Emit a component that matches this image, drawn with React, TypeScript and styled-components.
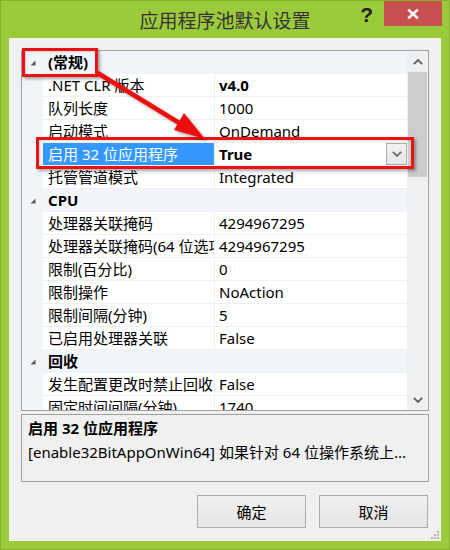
import React from 'react';
import styled, { createGlobalStyle } from 'styled-components';

const FONT = `"Noto Sans", "Noto Sans CJK SC", sans-serif`;

const GlobalStyle = createGlobalStyle`
  html, body { margin: 0; padding: 0; background: #ffffff; }
  body { font-family: ${FONT}; }
  * { box-sizing: border-box; }
`;

const Window = styled.div`
  position: relative;
  width: 450px;
  height: 550px;
  background: #9bca3b;
  border: 1px solid #86b12f;
  padding: 0 8px 8px 8px;
  display: flex;
  flex-direction: column;
`;

const TitleBar = styled.div`
  height: 37px;
  flex: none;
  display: grid;
  grid-template-columns: 1fr auto 1fr;
  align-items: start;
`;

const Title = styled.div`
  grid-column: 2;
  font-family: "Noto Sans CJK SC", sans-serif;
  font-size: 19px;
  line-height: 38px;
  color: #333333;
  white-space: nowrap;
`;

const Controls = styled.div`
  grid-column: 3;
  justify-self: end;
  display: flex;
  align-items: flex-start;
  margin-right: -1px;
`;

const HelpGlyph = styled.div`
  font-family: "Liberation Sans", sans-serif;
  font-weight: bold;
  font-size: 21px;
  line-height: 28px;
  color: #222222;
  margin-right: 11px;
`;

const CloseButton = styled.div`
  width: 58px;
  height: 25px;
  background: #c75050;
  display: flex;
  align-items: center;
  justify-content: center;
`;

const Body = styled.div`
  position: relative;
  flex: 1;
  background: #f0f0f0;
  padding: 12px 12px 0 12px;
  display: flex;
  flex-direction: column;
`;

const Grid = styled.div`
  height: 361px;
  flex: none;
  border: 1px solid #a0a0a0;
  background: #ffffff;
  display: flex;
  overflow: hidden;
`;

const RowList = styled.div`
  flex: 1;
  display: flex;
  flex-direction: column;
  overflow: hidden;
`;

const CAT_BG = '#f1f5fa';

const PropRow = styled.div`
  flex: none;
  height: 23px;
  display: grid;
  grid-template-columns: 21px 172px 1fr;
  font-size: 15px;
  color: #000000;
`;

const Gutter = styled.div`
  background: ${CAT_BG};
  display: flex;
  align-items: center;
  padding-left: 8px;
  padding-top: 1px;
`;

const NameCell = styled.div<{ $selected?: boolean }>`
  border-bottom: 1px solid #f0f0f0;
  border-right: 1px solid #f0f0f0;
  padding: 1px 0 0 5px;
  line-height: 21px;
  white-space: nowrap;
  overflow: hidden;
  background: ${(p) => (p.$selected ? '#3399ff' : 'transparent')};
  color: ${(p) => (p.$selected ? '#ffffff' : '#000000')};
`;

const ValueCell = styled.div<{ $bold?: boolean }>`
  border-bottom: 1px solid #f0f0f0;
  padding-left: 4px;
  display: flex;
  align-items: flex-start;
  line-height: 21px;
  font-weight: ${(p) => (p.$bold ? 'bold' : 'normal')};
  white-space: nowrap;
  overflow: hidden;
`;

const ValueText = styled.span`
  flex: 1;
  padding-top: 1px;
`;

const DropButton = styled.div`
  width: 21px;
  height: 22px;
  border: 1px solid #acacac;
  background: linear-gradient(#f2f2f2, #e6e6e6);
  display: flex;
  align-items: center;
  justify-content: center;
`;

const CategoryRow = styled.div`
  flex: none;
  height: 23px;
  display: grid;
  grid-template-columns: 21px 1fr;
  background: ${CAT_BG};
  font-size: 15px;
  font-weight: bold;
  color: #000000;
`;

const CategoryLabel = styled.div`
  padding: 1px 0 0 5px;
  line-height: 21px;
  border-bottom: 1px solid #eef1f5;
`;

const Scrollbar = styled.div`
  width: 21px;
  flex: none;
  background: #f0f0f0;
  display: flex;
  flex-direction: column;
`;

const ScrollArrow = styled.div`
  height: 21px;
  flex: none;
  display: flex;
  align-items: center;
  justify-content: center;
`;

const Track = styled.div`
  flex: 1;
  display: flex;
  flex-direction: column;
`;

const Thumb = styled.div`
  height: 105px;
  margin: 0 1px;
  background: #cdcdcd;
`;

const Description = styled.div`
  margin-top: 3px;
  height: 68px;
  flex: none;
  border: 1px solid #a0a0a0;
  padding: 3px 6px 0 6px;
  font-size: 15px;
  color: #000000;
`;

const DescTitle = styled.div`
  font-weight: bold;
  line-height: 20px;
`;

const DescText = styled.div`
  margin-top: 4px;
  line-height: 20px;
  white-space: nowrap;
`;

const Footer = styled.div`
  margin-top: 13px;
  display: flex;
  justify-content: flex-end;
  gap: 13px;
  padding-right: 1px;
`;

const Button = styled.div`
  width: 109px;
  height: 33px;
  border: 1px solid #adadad;
  background: linear-gradient(#f0f0f0, #e5e5e5);
  display: flex;
  align-items: center;
  justify-content: center;
  font-family: "Noto Sans CJK SC", sans-serif;
  font-size: 15px;
  color: #000000;
`;

const Grip = styled.svg`
  position: absolute;
  right: 1px;
  bottom: 1px;
`;

const Highlight = styled.div`
  position: absolute;
  border: 3px solid #ee1111;
  box-shadow: 2px 2px 3px rgba(0, 0, 0, 0.35), inset 1px 1px 2px rgba(0, 0, 0, 0.15);
  pointer-events: none;
`;

const ArrowLayer = styled.svg`
  position: absolute;
  left: -1px;
  top: -1px;
  pointer-events: none;
  overflow: visible;
`;

type Row =
  | { kind: 'cat'; label: string }
  | { kind: 'prop'; label: string; value: string; bold?: boolean; selected?: boolean };

const rows: Row[] = [
  { kind: 'cat', label: '(常规)' },
  { kind: 'prop', label: '.NET CLR 版本', value: 'v4.0', bold: true },
  { kind: 'prop', label: '队列长度', value: '1000' },
  { kind: 'prop', label: '启动模式', value: 'OnDemand' },
  { kind: 'prop', label: '启用 32 位应用程序', value: 'True', bold: true, selected: true },
  { kind: 'prop', label: '托管管道模式', value: 'Integrated' },
  { kind: 'cat', label: 'CPU' },
  { kind: 'prop', label: '处理器关联掩码', value: '4294967295' },
  { kind: 'prop', label: '处理器关联掩码(64 位选项)', value: '4294967295' },
  { kind: 'prop', label: '限制(百分比)', value: '0' },
  { kind: 'prop', label: '限制操作', value: 'NoAction' },
  { kind: 'prop', label: '限制间隔(分钟)', value: '5' },
  { kind: 'prop', label: '已启用处理器关联', value: 'False' },
  { kind: 'cat', label: '回收' },
  { kind: 'prop', label: '发生配置更改时禁止回收', value: 'False' },
  { kind: 'prop', label: '固定时间间隔(分钟)', value: '1740' },
];

const Triangle = () => (
  <svg width="6" height="6" viewBox="0 0 6 6">
    <polygon points="5.5,0.5 5.5,5.5 0.5,5.5" fill="#5a5a5a" />
  </svg>
);

const Chevron = ({ up, color }: { up?: boolean; color: string }) => (
  <svg width="10" height="6" viewBox="0 0 10 6">
    <polyline
      points={up ? '0.8,5.2 5,1 9.2,5.2' : '0.8,0.8 5,5 9.2,0.8'}
      fill="none"
      stroke={color}
      strokeWidth="1.8"
    />
  </svg>
);

export default function App() {
  return (
    <>
      <GlobalStyle />
      <Window>
        <TitleBar>
          <Title>应用程序池默认设置</Title>
          <Controls>
            <HelpGlyph>?</HelpGlyph>
            <CloseButton>
              <svg width="12" height="10" viewBox="0 0 12 10">
                <path d="M1.2 0.6 L10.8 9.4 M10.8 0.6 L1.2 9.4" stroke="#ffffff" strokeWidth="2.6" />
              </svg>
            </CloseButton>
          </Controls>
        </TitleBar>
        <Body>
          <Grid>
            <RowList>
              {rows.map((r, i) =>
                r.kind === 'cat' ? (
                  <CategoryRow key={i}>
                    <Gutter>
                      <Triangle />
                    </Gutter>
                    <CategoryLabel>{r.label}</CategoryLabel>
                  </CategoryRow>
                ) : (
                  <PropRow key={i}>
                    <Gutter />
                    <NameCell $selected={r.selected}>{r.label}</NameCell>
                    <ValueCell $bold={r.bold}>
                      <ValueText>{r.value}</ValueText>
                      {r.selected && (
                        <DropButton>
                          <Chevron color="#707070" />
                        </DropButton>
                      )}
                    </ValueCell>
                  </PropRow>
                )
              )}
            </RowList>
            <Scrollbar>
              <ScrollArrow>
                <Chevron up color="#606060" />
              </ScrollArrow>
              <Track>
                <Thumb />
              </Track>
              <ScrollArrow>
                <Chevron color="#606060" />
              </ScrollArrow>
            </Scrollbar>
          </Grid>
          <Description>
            <DescTitle>启用 32 位应用程序</DescTitle>
            <DescText>[enable32BitAppOnWin64] 如果针对 64 位操作系统上...</DescText>
          </Description>
          <Footer>
            <Button>确定</Button>
            <Button>取消</Button>
          </Footer>
          <Grip width="10" height="10" viewBox="0 0 10 10">
            <rect x="7" y="1" width="2" height="2" fill="#b4b4b4" />
            <rect x="4" y="4" width="2" height="2" fill="#b4b4b4" />
            <rect x="7" y="4" width="2" height="2" fill="#b4b4b4" />
            <rect x="1" y="7" width="2" height="2" fill="#b4b4b4" />
            <rect x="4" y="7" width="2" height="2" fill="#b4b4b4" />
            <rect x="7" y="7" width="2" height="2" fill="#b4b4b4" />
          </Grip>
        </Body>
        <Highlight style={{ left: 21, top: 47, width: 76, height: 29 }} />
        <Highlight style={{ left: 35, top: 136, width: 378, height: 32 }} />
        <ArrowLayer width="450" height="550" viewBox="0 0 450 550">
          <defs>
            <filter id="arrowShadow" x="-20%" y="-20%" width="140%" height="140%">
              <feDropShadow dx="2" dy="2" stdDeviation="1.5" floodColor="#000" floodOpacity="0.35" />
            </filter>
          </defs>
          <g filter="url(#arrowShadow)">
            <line x1="96" y1="72" x2="181" y2="124" stroke="#ee1111" strokeWidth="4.5" />
            <polygon points="205,139 174,130 184,113" fill="#ee1111" />
          </g>
        </ArrowLayer>
      </Window>
    </>
  );
}
